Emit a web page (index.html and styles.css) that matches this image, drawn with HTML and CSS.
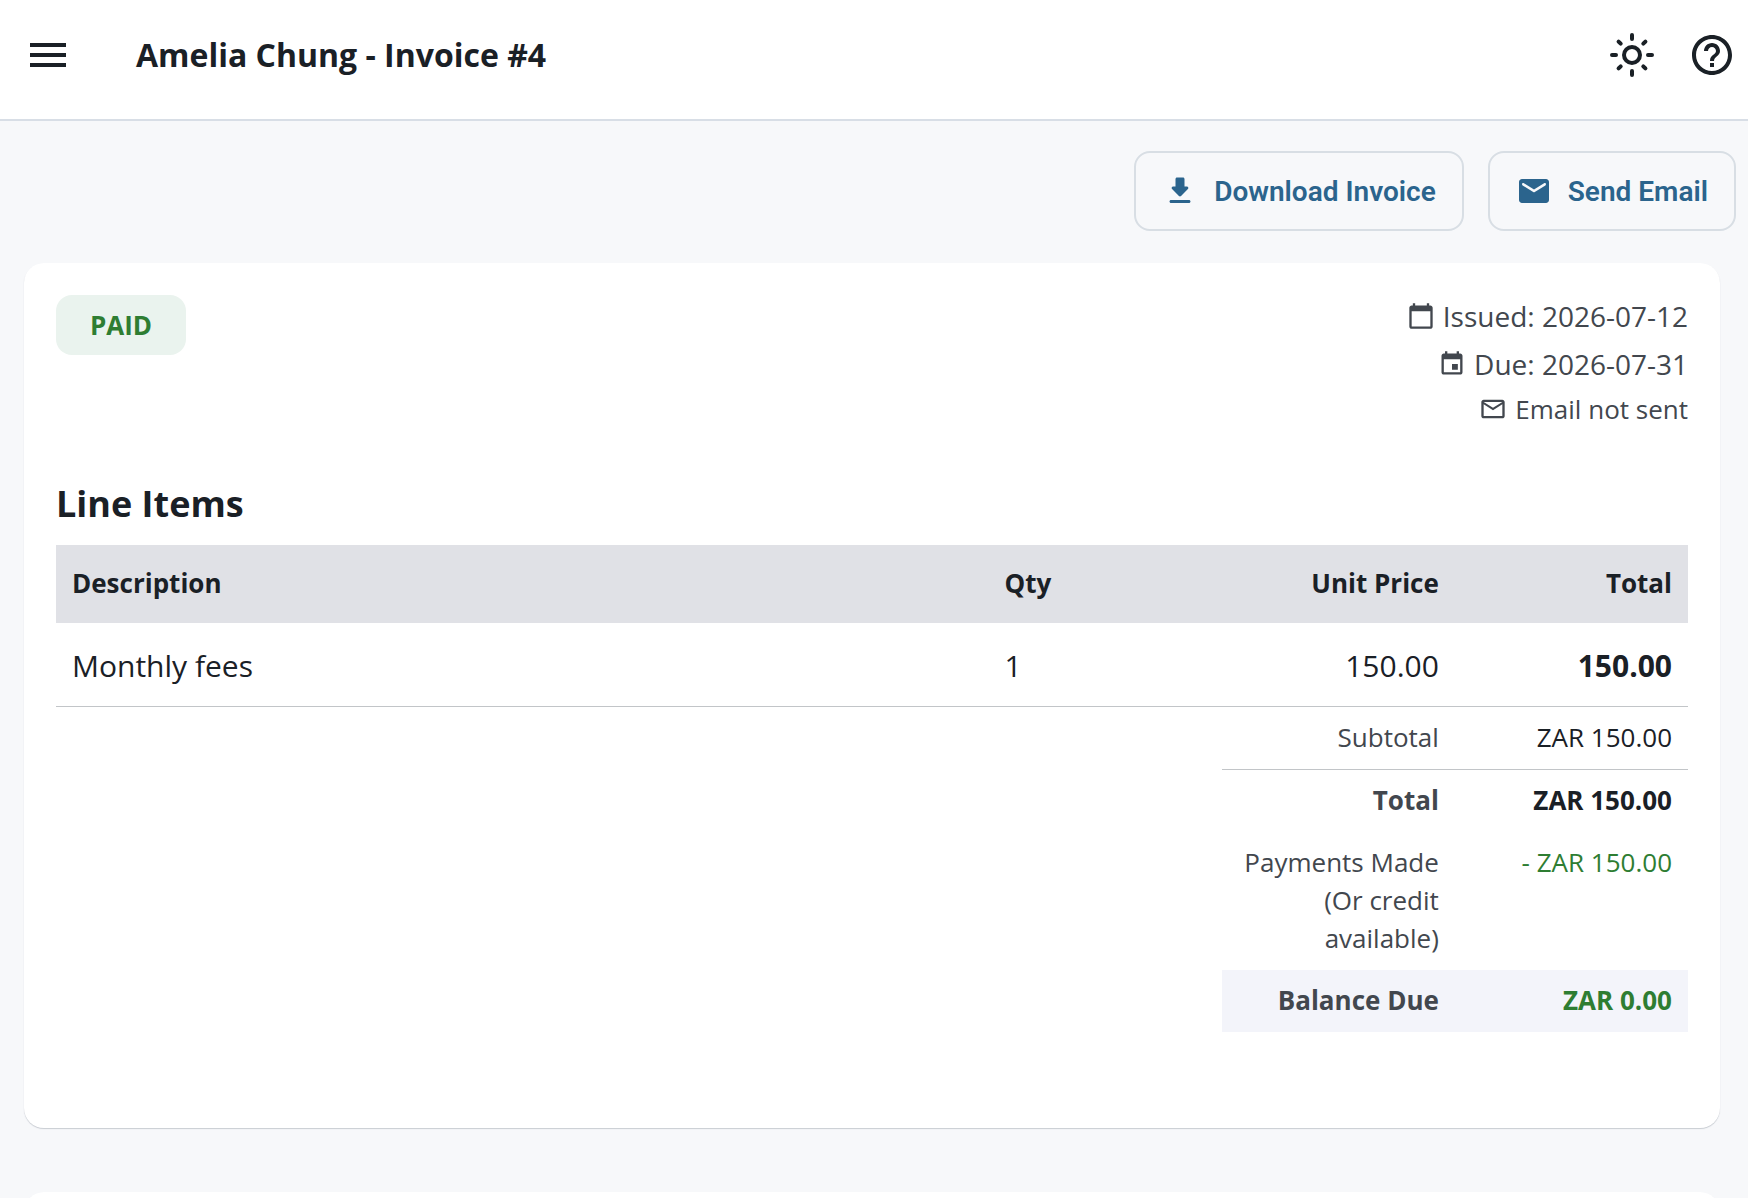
FILE: index.html
```html
<!DOCTYPE html>
<html lang="en">
<head>
  <meta charset="UTF-8" />
  <meta name="viewport" content="width=device-width, initial-scale=1.0" />
  <title>Amelia Chung - Invoice #4</title>
  <link rel="stylesheet" href="styles.css">
</head>
<body>
  <header class="topbar">
    <button type="button" class="icon-btn" aria-label="Open menu">
      <svg viewBox="0 0 24 24"><path d="M3 18h18v-2H3v2zm0-5h18v-2H3v2zm0-7v2h18V6H3z"/></svg>
    </button>
    <h1>Amelia Chung - Invoice #4</h1>
    <button type="button" class="icon-btn" aria-label="Toggle theme">
      <svg class="sun" viewBox="0 0 24 24">
        <circle cx="12" cy="12" r="4"/>
        <path d="M12 2v2M12 20v2M2 12h2M20 12h2M5.29 5.29l1.06 1.06M17.65 17.65l1.06 1.06M18.71 5.29l-1.06 1.06M6.35 17.65l-1.06 1.06"/>
      </svg>
    </button>
    <button type="button" class="icon-btn" aria-label="Help">
      <svg viewBox="0 0 24 24"><path d="M11 18h2v-2h-2v2zm1-16C6.48 2 2 6.48 2 12s4.48 10 10 10 10-4.48 10-10S17.52 2 12 2zm0 18c-4.41 0-8-3.59-8-8s3.59-8 8-8 8 3.59 8 8-3.59 8-8 8zm0-14c-2.21 0-4 1.79-4 4h2c0-1.1.9-2 2-2s2 .9 2 2c0 2-3 1.75-3 5h2c0-2.25 3-2.5 3-5 0-2.21-1.79-4-4-4z"/></svg>
    </button>
  </header>

  <main>
    <div class="actions">
      <button type="button" class="action-btn">
        <svg viewBox="0 0 24 24"><path d="M16.59 9H15V4c0-.55-.45-1-1-1h-4c-.55 0-1 .45-1 1v5H7.41c-.89 0-1.34 1.08-.71 1.71l4.59 4.59c.39.39 1.02.39 1.41 0l4.59-4.59c.63-.63.19-1.71-.7-1.71zM5 19c0 .55.45 1 1 1h12c.55 0 1-.45 1-1s-.45-1-1-1H6c-.55 0-1 .45-1 1z"/></svg>
        Download Invoice
      </button>
      <button type="button" class="action-btn">
        <svg viewBox="0 0 24 24"><path d="M20 4H4c-1.1 0-2 .9-2 2v12c0 1.1.9 2 2 2h16c1.1 0 2-.9 2-2V6c0-1.1-.9-2-2-2zm-.4 4.25l-7.07 4.42c-.32.2-.74.2-1.06 0L4.4 8.25c-.25-.16-.4-.43-.4-.72 0-.67.73-1.07 1.3-.72L12 11l6.7-4.19c.57-.35 1.3.05 1.3.72 0 .29-.15.56-.4.72z"/></svg>
        Send Email
      </button>
    </div>

    <section class="card">
      <div class="summary">
        <span class="status">PAID</span>
        <ul class="meta">
          <li>
            <svg viewBox="0 0 24 24"><path d="M20 3h-1V1h-2v2H7V1H5v2H4c-1.1 0-2 .9-2 2v16c0 1.1.9 2 2 2h16c1.1 0 2-.9 2-2V5c0-1.1-.9-2-2-2zm0 18H4V8h16v13z"/></svg>
            Issued: 2026-07-12
          </li>
          <li>
            <svg viewBox="0 0 24 24"><path d="M17 12h-5v5h5v-5zM16 1v2H8V1H6v2H5c-1.11 0-1.99.9-1.99 2L3 19c0 1.1.89 2 2 2h14c1.1 0 2-.9 2-2V5c0-1.1-.9-2-2-2h-1V1h-2zm3 18H5V8h14v11z"/></svg>
            Due: 2026-07-31
          </li>
          <li class="email">
            <svg viewBox="0 0 24 24"><path d="M22 6c0-1.1-.9-2-2-2H4c-1.1 0-2 .9-2 2v12c0 1.1.9 2 2 2h16c1.1 0 2-.9 2-2V6zm-2 0l-8 5-8-5h16zm0 12H4V8l8 5 8-5v10z"/></svg>
            Email not sent
          </li>
        </ul>
      </div>

      <h2>Line Items</h2>
      <table class="items">
        <colgroup>
          <col class="wide"><col><col><col>
        </colgroup>
        <thead>
          <tr>
            <th>Description</th>
            <th>Qty</th>
            <th class="num">Unit Price</th>
            <th class="num">Total</th>
          </tr>
        </thead>
        <tbody>
          <tr>
            <td>Monthly fees</td>
            <td>1</td>
            <td class="num">150.00</td>
            <td class="num strong">150.00</td>
          </tr>
        </tbody>
        <tfoot>
          <tr class="subtotal">
            <td colspan="2"></td>
            <th>Subtotal</th>
            <td>ZAR 150.00</td>
          </tr>
          <tr class="strong">
            <td colspan="2"></td>
            <th>Total</th>
            <td>ZAR 150.00</td>
          </tr>
          <tr>
            <td colspan="2"></td>
            <th>Payments Made (Or credit available)</th>
            <td class="green">- ZAR 150.00</td>
          </tr>
          <tr class="balance strong">
            <td colspan="2"></td>
            <th>Balance Due</th>
            <td class="green">ZAR 0.00</td>
          </tr>
        </tfoot>
      </table>
    </section>

    <section class="card"></section>
  </main>
</body>
</html>
```
FILE: styles.css
```css
* {
  box-sizing: border-box;
}
body {
  margin: 0;
  background: #f7f8fa;
  font-family: 'Open Sans', sans-serif;
  font-size: 26px;
  line-height: 38px;
  color: #1a2026;
}
svg {
  display: block;
  flex-shrink: 0;
  fill: currentColor;
}

/* top bar */
.topbar {
  display: flex;
  align-items: center;
  gap: 32px;
  padding: 31px 12px 40px 24px;
  background: #fff;
  border-bottom: 2px solid #d8dee6;
}
.topbar h1 {
  flex: 1;
  margin: 0 0 0 32px;
  font-size: 32px;
  line-height: 48px;
  font-weight: 700;
}
.icon-btn {
  padding: 0;
  border: none;
  background: none;
  color: inherit;
  cursor: pointer;
}
.icon-btn svg {
  width: 48px;
  height: 48px;
}
.icon-btn .sun {
  fill: none;
  stroke: currentColor;
  stroke-width: 2;
  stroke-linecap: round;
}

/* actions */
.actions {
  display: flex;
  justify-content: flex-end;
  gap: 24px;
  padding: 30px 12px 32px;
}
.action-btn {
  display: flex;
  align-items: center;
  gap: 16px;
  height: 80px;
  padding: 0 26px;
  border: 2px solid #d8dee4;
  border-radius: 16px;
  background: none;
  color: #2b648d;
  font-family: Roboto, sans-serif;
  font-size: 28px;
  font-weight: 600;
  cursor: pointer;
}
.action-btn svg {
  width: 36px;
  height: 36px;
}

/* invoice card */
.card {
  margin: 0 28px 64px 24px;
  padding: 32px 32px 96px;
  border-radius: 20px;
  background: #fff;
  box-shadow: 0 1px 1px #c8ccd2;
}
.summary {
  display: flex;
  justify-content: space-between;
  align-items: flex-start;
}
.status {
  padding: 11px 34px;
  border-radius: 16px;
  background: #eaf3ee;
  color: #2e7d32;
  font-weight: 700;
}
.meta {
  display: flex;
  flex-direction: column;
  gap: 6px;
  margin: 0;
  padding: 0;
  list-style: none;
  color: #42474e;
}
.meta li {
  display: flex;
  align-items: center;
  justify-content: flex-end;
  gap: 8px;
  font-size: 28px;
  line-height: 42px;
}
.meta li.email {
  font-size: 26px;
  line-height: 36px;
}
.meta svg {
  width: 28px;
  height: 28px;
}
.card h2 {
  margin: 51px 0 15px;
  font-size: 36px;
  line-height: 52px;
  font-weight: 700;
}

/* line items */
.items {
  width: 100%;
  table-layout: fixed;
  border-collapse: separate;
  border-spacing: 0;
}
.items .wide {
  width: 57.143%;
}
.items th, .items td {
  text-align: left;
  vertical-align: top;
}
.items thead th {
  padding: 19px 16px 21px;
  background: #e0e1e6;
  font-weight: 700;
}
.items tbody td {
  padding: 21px 16px 18px;
  border-bottom: 1px solid #c2c5c8;
  font-size: 30px;
  line-height: 44px;
}
.items .num, .items tfoot th, .items tfoot td {
  text-align: right;
}
.items tfoot th, .items tfoot td {
  padding: 11px 16px 13px;
}
.items tfoot th {
  color: #42474e;
  font-weight: 400;
}
.items .subtotal th, .items .subtotal th + td {
  border-bottom: 1px solid #c2c5c8;
}
.items .strong, .items .strong th, .items .strong td {
  font-weight: 700;
}
.items .balance th, .items .balance th + td {
  background: #f3f4fa;
}
.items .green {
  color: #2e7d32;
}
```
